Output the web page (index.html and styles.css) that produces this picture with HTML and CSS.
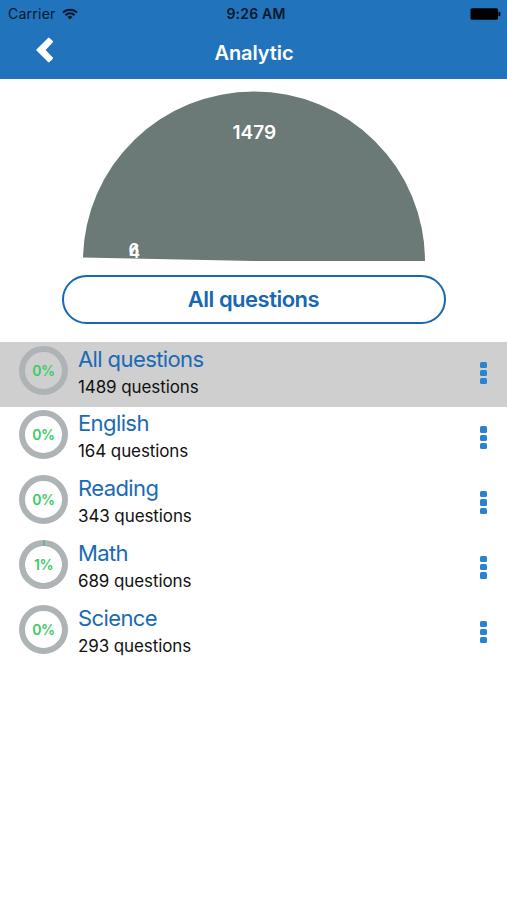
FILE: index.html
```html
<!DOCTYPE html>
<html lang="en">
<head>
  <meta charset="UTF-8" />
  <meta name="viewport" content="width=device-width, initial-scale=1.0"/>
  <title>Analytic</title>
  <link rel="stylesheet" href="styles.css">
</head>
<body>

<header>
  <div class="status-bar">
    <div class="carrier">
      <span>Carrier</span>
      <svg class="wifi" width="16" height="12" viewBox="0 0 16 12" fill="none" stroke="#06182a" stroke-width="2">
        <path d="M1 4.6a10 10 0 0 1 14 0"/>
        <path d="M3.5 7.2a6.4 6.4 0 0 1 9 0"/>
        <path d="M8 11.4L5.5 8.9a3.6 3.6 0 0 1 5 0z" fill="#06182a" stroke="none"/>
      </svg>
    </div>
    <span class="time">9:26 AM</span>
    <svg class="battery" width="31" height="12" viewBox="0 0 31 12">
      <rect x="0.5" y="0.3" width="27.5" height="11.4" rx="1.5"/>
      <rect x="28.4" y="3.8" width="2" height="4.4" rx="1"/>
    </svg>
  </div>
  <div class="nav-bar">
    <svg class="back" width="18" height="26" viewBox="0 0 18 26" fill="white" stroke="white" stroke-width="2" stroke-linejoin="round">
      <path d="M12.8 1.6L1.4 13l11.4 11.4 3.2-3.2L8.2 13 16 4.8z"/>
    </svg>
    <h1>Analytic</h1>
  </div>
</header>

<div class="chart">
  <svg width="342" height="170" viewBox="0 0 342 170">
    <path d="M171 170H342A171 169.5 0 0 0 171 0.5A171 169.5 0 0 0 0 166.5z" fill="#6b7977"/>
    <g class="chart-labels">
      <text class="total" x="171.3" y="47.5">1479</text>
      <text x="51.5" y="166.5">4</text>
      <text x="51" y="165">6</text>
    </g>
  </svg>
</div>

<button class="filter">All questions</button>

<div class="subjects">
  <div class="subject selected">
    <div class="ring">0%</div>
    <div class="info">
      <h2>All questions</h2>
      <p>1489 questions</p>
    </div>
    <div class="menu"><i></i><i></i><i></i></div>
  </div>
  <div class="subject">
    <div class="ring">0%</div>
    <div class="info">
      <h2>English</h2>
      <p>164 questions</p>
    </div>
    <div class="menu"><i></i><i></i><i></i></div>
  </div>
  <div class="subject">
    <div class="ring">0%</div>
    <div class="info">
      <h2>Reading</h2>
      <p>343 questions</p>
    </div>
    <div class="menu"><i></i><i></i><i></i></div>
  </div>
  <div class="subject">
    <div class="ring started">1%</div>
    <div class="info">
      <h2>Math</h2>
      <p>689 questions</p>
    </div>
    <div class="menu"><i></i><i></i><i></i></div>
  </div>
  <div class="subject">
    <div class="ring">0%</div>
    <div class="info">
      <h2>Science</h2>
      <p>293 questions</p>
    </div>
    <div class="menu"><i></i><i></i><i></i></div>
  </div>
</div>

</body>
</html>
```
FILE: styles.css
```css
* {
  box-sizing: border-box;
}
body {
  font-family: Inter, "Liberation Sans", sans-serif;
  background: white;
  margin: 0;
}
h1, h2, p {
  margin: 0;
}
header {
  background: #2173bb;
  height: 79px;
}
.status-bar {
  display: grid;
  grid-template-columns: 1fr auto 1fr;
  align-items: center;
  height: 27px;
  padding: 0 6px 0 8px;
  color: #06182a;
  font-size: 14px;
}
.carrier {
  display: flex;
  align-items: center;
  gap: 6px;
  letter-spacing: 0.25px;
}
.time {
  padding-left: 3px;
  font-weight: 600;
  letter-spacing: 0.2px;
}
.battery {
  justify-self: end;
}
.nav-bar {
  display: grid;
  grid-template-columns: 1fr auto 1fr;
  align-items: center;
  height: 51px;
  color: white;
}
.back {
  margin: -5px 0 0 36px;
}
.nav-bar h1 {
  padding-left: 1px;
  font-size: 20px;
  font-weight: 600;
  letter-spacing: -0.1px;
}
.chart {
  display: flex;
  justify-content: center;
  padding: 12px 0 14px;
}
.chart-labels {
  fill: white;
  font-size: 17px;
  font-weight: 600;
  text-anchor: middle;
}
.chart-labels .total {
  font-size: 19px;
}
.filter {
  display: block;
  width: 384px;
  height: 49px;
  margin: 0 auto;
  padding: 0 0 2px;
  background: white;
  border: 2px solid #1767b1;
  border-radius: 25px;
  color: #1767b1;
  font-family: inherit;
  font-size: 22px;
  font-weight: 600;
  letter-spacing: -0.5px;
}
.subjects {
  margin-top: 18px;
}
.subject {
  display: flex;
  height: 64.75px;
  padding: 3.5px 20px 0 19px;
}
.selected {
  background: #cfcfcf;
}
.ring {
  display: flex;
  align-items: center;
  justify-content: center;
  width: 49px;
  height: 49px;
  border: 6px solid #aeb3b5;
  border-radius: 50%;
  color: #3cc968;
  font-size: 14px;
  font-weight: 600;
  letter-spacing: -0.4px;
}
.started {
  border: none;
  background: radial-gradient(circle, white 18px, transparent 18.7px), conic-gradient(#6db58c 1%, #aeb3b5 1%);
}
.info {
  flex: 1;
  margin-left: 10px;
}
.info h2 {
  color: #1b6ab5;
  font-size: 22px;
  font-weight: 400;
  letter-spacing: -0.6px;
  line-height: 27px;
}
.info p {
  color: #111;
  font-size: 17px;
  letter-spacing: -0.1px;
  line-height: 28px;
}
.menu {
  display: flex;
  flex-direction: column;
  gap: 2px;
  margin-top: 16px;
}
.menu i {
  width: 7px;
  height: 6.3px;
  background: #2b82cf;
  border-radius: 1.5px;
}
```
